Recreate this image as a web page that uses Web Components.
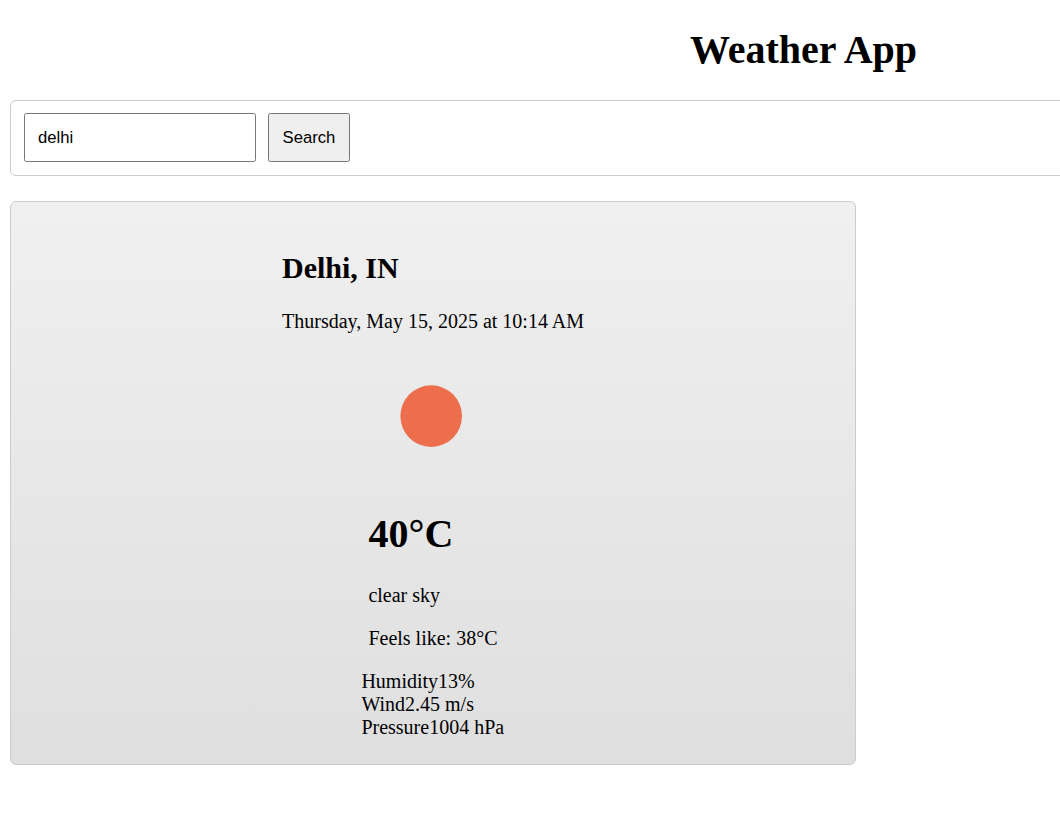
<!DOCTYPE html>
<html lang="en">
<head>
<meta charset="utf-8">
<title>Weather App</title>
<style>
html{overflow:hidden;background:#fff}
body{margin:0;font:20px "Liberation Serif","Times New Roman",serif;color:#000}
</style>
</head>
<body>
<weather-app></weather-app>
<script>
class WeatherSearch extends HTMLElement {
  constructor() {
    super();
    this.attachShadow({mode: 'open'}).innerHTML = `
      <style>
        :host{display:flex;gap:12px;box-sizing:border-box;height:76px;padding:12px 13px 13px;border:1px solid #ccc;border-radius:6px}
        input,button{box-sizing:border-box;height:49px;margin:0;border:1px solid #767676;border-radius:2.5px;font:16.667px "Liberation Sans",Arial,sans-serif;color:#000}
        input{width:232px;padding:0 13px;background:#fff;outline:none}
        button{width:82px;padding:0;background:#efefef}
      </style>
      <input type="text" aria-label="City"><button type="button">Search</button>`;
    this.shadowRoot.querySelector('input').value = this.getAttribute('city') || '';
  }
}
customElements.define('weather-search', WeatherSearch);

class SunIcon extends HTMLElement {
  constructor() {
    super();
    this.attachShadow({mode: 'open'}).innerHTML = `
      <style>:host{display:block;width:125px;height:125px}svg{display:block}</style>
      <svg width="125" height="125" viewBox="0 0 125 125" aria-hidden="true"><circle cx="62.2" cy="62.1" r="30.8" fill="#ec6e4c"/></svg>`;
  }
}
customElements.define('sun-icon', SunIcon);

class WeatherCard extends HTMLElement {
  constructor() {
    super();
    this.attachShadow({mode: 'open'}).innerHTML = `
      <style>
        :host{display:grid;justify-content:center;align-content:start;box-sizing:border-box;width:846px;height:564px;padding-top:49px;border:1px solid #ccc;border-radius:6px;background:linear-gradient(#f0f0f0,#dfdfdf)}
        .place{width:302px}
        h2{margin:0 0 25px;font-size:30px;line-height:34px}
        p{margin:0;line-height:23px}
        sun-icon{margin:21px 0 32px 87px}
        h1{margin:0 0 27px;font-size:40px;line-height:46px}
        .now{padding-left:86.4px}
        .now p{margin-bottom:20px}
        .details{padding-left:79.4px;line-height:23px}
      </style>
      <div class="place"><h2><slot name="city"></slot></h2><p><slot name="date"></slot></p></div>
      <sun-icon></sun-icon>
      <div class="now"><h1><slot name="temp"></slot></h1><p><slot name="sky"></slot></p><p><slot name="feels"></slot></p></div>
      <div class="details"><slot></slot></div>`;
  }
}
customElements.define('weather-card', WeatherCard);

class WeatherApp extends HTMLElement {
  constructor() {
    super();
    this.attachShadow({mode: 'open'}).innerHTML = `
      <style>
        :host{display:block;width:1587px;padding:27px 10px 0}
        h1{margin:0 0 27px;font-size:40px;line-height:46px;text-align:center}
        weather-search{margin-bottom:25px}
      </style>
      <h1>Weather App</h1>
      <weather-search city="delhi"></weather-search>
      <weather-card>
        <span slot="city">Delhi, IN</span>
        <span slot="date">Thursday, May 15, 2025 at 10:14 AM</span>
        <span slot="temp">40°C</span>
        <span slot="sky">clear sky</span>
        <span slot="feels">Feels like: 38°C</span>
        <div>Humidity<span>13%</span></div>
        <div>Wind<span>2.45 m/s</span></div>
        <div>Pressure<span>1004 hPa</span></div>
      </weather-card>`;
  }
}
customElements.define('weather-app', WeatherApp);
</script>
</body>
</html>
